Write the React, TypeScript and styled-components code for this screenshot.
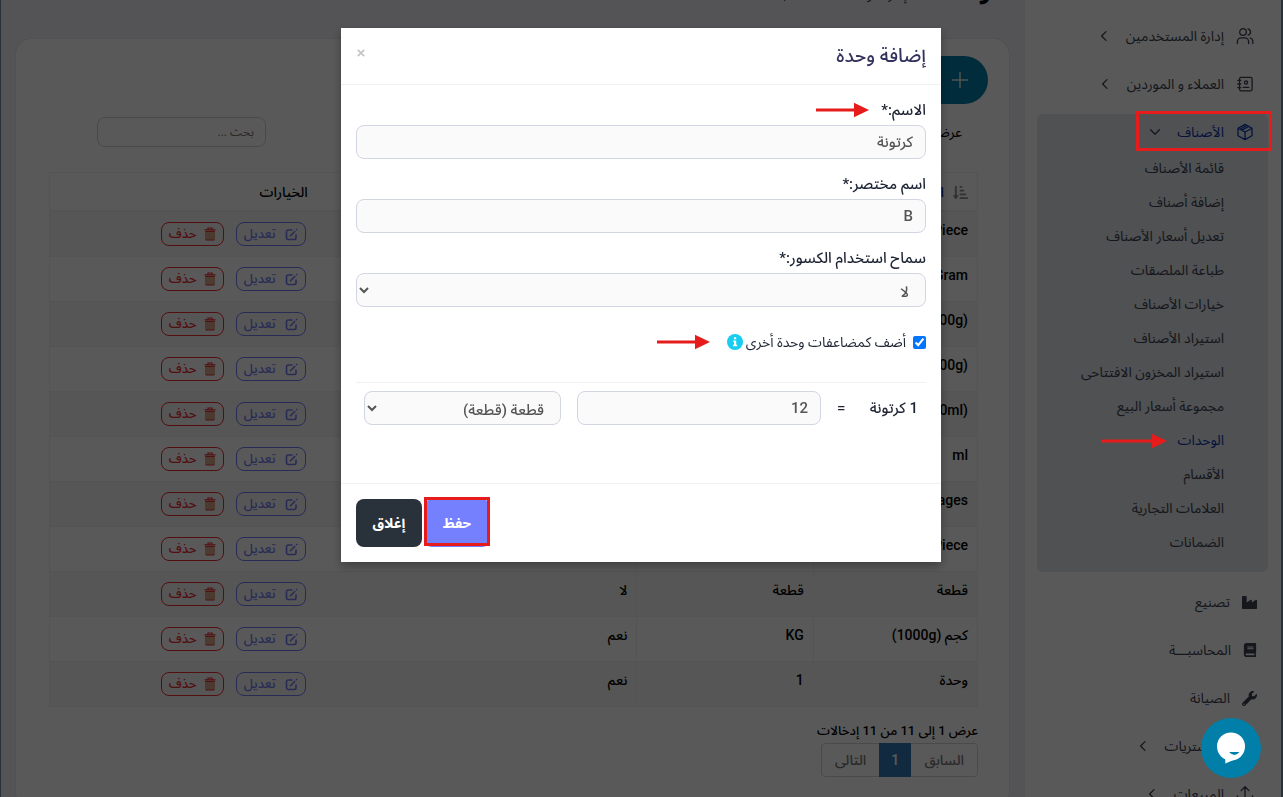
import React from "react";
import styled, { createGlobalStyle, css } from "styled-components";
import { FaIndustry, FaBook, FaWrench, FaSortAmountDownAlt } from "react-icons/fa";

const ink = "#1d2433";
const sans = `Roboto, "Noto Sans Arabic", "DejaVu Sans", sans-serif`;

const GlobalStyle = createGlobalStyle`
  *, *::before, *::after { box-sizing: border-box; }
  html, body { margin: 0; }
  body { overflow: hidden; background: #eff1f6; color: #000; font: 13px/20px ${sans}; }
  button, input, select { font-family: inherit; margin: 0; }
  ul { list-style: none; margin: 0; padding: 0; }
  a { color: inherit; text-decoration: none; }
`;

const Shell = styled.div`
  display: flex;
  height: 100vh;
  overflow: hidden;
  border: solid #6d8ca3;
  border-width: 0 2px 0 1px;
`;

const Sidebar = styled.aside`
  flex: 0 0 256px;
  padding: 18px 13px 0 12px;
  background: #fff;
  overflow: hidden;
  color: #3c4354;
`;

const Menu = styled.ul`
  display: flex;
  flex-direction: column;
  gap: 12px;
`;

const MenuItem = styled.li<{ $open?: boolean }>`
  border-radius: 6px;
  background: ${(p) => (p.$open ? "#e5e8eb" : "transparent")};
`;

const MenuLink = styled.a<{ $active?: boolean; $solid?: boolean }>`
  display: flex;
  align-items: center;
  gap: 12px;
  height: 36px;
  padding-inline-start: ${(p) => (p.$solid ? 11 : 14)}px;
  font-size: 14px;
  color: ${(p) => (p.$active ? "#0b38ad" : "inherit")};
  svg { flex: none; }
`;

const ChevronBox = styled.span`
  display: flex;
  margin-inline-start: 4px;
  color: #3c4354;
`;

const SubMenu = styled.ul`
  padding: 1px 44px 13px 0;
`;

const SubLink = styled.a<{ $active?: boolean }>`
  display: flex;
  align-items: center;
  height: 34px;
  font-size: 14px;
  color: ${(p) => (p.$active ? "#0b38ad" : "inherit")};
`;

const Main = styled.main`
  flex: 1;
  min-width: 0;
  padding: 0 16px 0 15px;
`;

const PageHead = styled.header`
  display: flex;
  align-items: baseline;
  gap: 12px;
  height: 32px;
  margin-top: -25px;
  padding-inline-start: 4px;
`;

const PageTitle = styled.h1`
  margin: 0;
  font-size: 24px;
  line-height: 32px;
`;

const PageNote = styled.small`
  font-size: 14px;
  color: #555;
`;

const Card = styled.section`
  margin-top: 32px;
  border-radius: 15px;
  background: #fff;
  box-shadow: 0 0 2px rgba(0, 0, 0, 0.15);
`;

const CardTools = styled.div`
  padding: 17px 21px 0;
`;

const AddButton = styled.button`
  display: flex;
  align-items: center;
  gap: 12px;
  height: 48px;
  padding: 0 20px;
  border: 0;
  border-radius: 24px;
  background: #027fa8;
  color: #fff;
  font-size: 14px;
`;

const TableTools = styled.div`
  display: flex;
  align-items: center;
  justify-content: space-between;
  padding: 13px 47px 0 81px;
`;

const LengthLabel = styled.label`
  display: flex;
  align-items: center;
  gap: 8px;
  font-size: 14px;
`;

const LengthSelect = styled.select`
  height: 30px;
  border: 1px solid #d8d8d8;
  border-radius: 8px;
  background: #fff;
`;

const SearchBox = styled.input`
  width: 169px;
  height: 30px;
  padding: 0 11px;
  border: 1px solid #d2d2d2;
  border-radius: 8px;
  background: #fff;
  font-size: 12px;
  &::placeholder { color: #777; opacity: 1; }
`;

const TableArea = styled.div`
  padding: 25px 31px 30px 33px;
`;

const Table = styled.table`
  width: 100%;
  table-layout: fixed;
  border-collapse: collapse;
  border: 1px solid #f0f0f0;
  font-weight: 500;
  font-size: 14px;
`;

const HeadCell = styled.th<{ $share?: string; $active?: boolean }>`
  width: ${(p) => p.$share || "auto"};
  height: 39px;
  padding: 0 9px;
  border-bottom: 1px solid #efefef;
  box-shadow: inset 0 -1px #efefef;
  text-align: start;
  font-size: 14px;
  font-weight: 500;
  color: ${(p) => (p.$active ? "#0a1f9c" : "#000")};
`;

const HeadLabel = styled.span`
  display: flex;
  align-items: center;
  gap: 9px;
  svg { color: #8d8d8d; }
`;

const Row = styled.tr`
  height: 45px;
  &:nth-child(odd) { background: #f6f6f6; }
`;

const Cell = styled.td`
  padding: 8px 9px 0;
  border: solid #f0f0f0;
  border-width: 1px 0;
  vertical-align: top;
  line-height: 20px;
  & + & { border-inline-start-width: 1px; }
`;

const ActionCell = styled.td`
  padding: 10px 11px 0;
  border: solid #f0f0f0;
  border-width: 1px 0;
  vertical-align: top;
`;

const Actions = styled.div`
  display: flex;
  gap: 12px;
`;

const RowButton = styled.button<{ $danger?: boolean }>`
  display: flex;
  align-items: center;
  justify-content: space-between;
  width: ${(p) => (p.$danger ? 63 : 70)}px;
  height: 24px;
  padding: 0 7px;
  border: 1px solid currentColor;
  border-radius: 8px;
  background: none;
  color: ${(p) => (p.$danger ? "#e92b30" : "#727cf5")};
  font-size: 13px;
  font-weight: 500;
`;

const Summary = styled.p`
  margin: 14px 0 2px;
  font-size: 13px;
  font-weight: 500;
`;

const Pager = styled.nav`
  display: flex;
  width: 157px;
  height: 34px;
  border: 1px solid #d5d5d5;
  border-radius: 4px;
`;

const PageLink = styled.button<{ $current?: boolean }>`
  flex: ${(p) => (p.$current ? "0 0 32px" : "1 1 auto")};
  margin: ${(p) => (p.$current ? "-1px 0" : "0")};
  padding: 0;
  border: 0;
  background: ${(p) => (p.$current ? "#337ab7" : "none")};
  color: ${(p) => (p.$current ? "#fff" : "#777")};
  font-size: 14px;
  font-weight: 500;
`;

const Backdrop = styled.div`
  position: fixed;
  inset: 0;
  display: flex;
  align-items: flex-start;
  justify-content: center;
  padding: 28px 1px 0 0;
  background: rgba(0, 0, 0, 0.65);
`;

const Dialog = styled.form`
  width: 600px;
  max-width: 100%;
  background: #fff;
  color: ${ink};
  box-shadow: 0 4px 10px rgba(0, 0, 0, 0.3);
`;

const DialogHead = styled.header`
  display: flex;
  align-items: center;
  justify-content: space-between;
  height: 57px;
  padding: 0 15px;
  border-bottom: 1px solid #f1f1f1;
`;

const DialogTitle = styled.h2`
  margin: 0;
  font-size: 19px;
  line-height: 28px;
  font-weight: 500;
  color: #32325d;
`;

const CloseIcon = styled.button`
  display: flex;
  padding: 0 1px 6px;
  border: 0;
  background: none;
  color: #c4c4c4;
`;

const DialogBody = styled.div`
  padding: 15px 15px 58px;
`;

const Field = styled.div`
  display: flex;
  flex-direction: column;
  align-items: flex-start;
  gap: 5px;
  margin-bottom: 15px;
`;

const FieldLabel = styled.label`
  position: relative;
  font-size: 15px;
  line-height: 20px;
  font-weight: 500;
`;

const control = css`
  height: 34px;
  border: 1px solid #d2d5e2;
  border-radius: 8px;
  background: #fafafa;
  color: #555;
  font-size: 15px;
  font-weight: 500;
`;

const TextInput = styled.input`
  ${control}
  width: 100%;
  padding: 0 12px;
`;

const SelectInput = styled.select`
  ${control}
  width: 100%;
  padding: 3px 12px 0 0;
`;

const CheckRow = styled.div`
  display: flex;
  align-items: center;
  gap: 7px;
  height: 40px;
  margin-bottom: 20px;
  font-size: 14px;
`;

const CheckBox = styled.input`
  width: 13px;
  height: 13px;
  accent-color: #0075ff;
`;

const CheckLabel = styled.label`
  position: relative;
  display: flex;
  align-items: center;
  gap: 3px;
`;

const Conversion = styled.div`
  display: grid;
  grid-template-columns: 47px 18px 1fr 197px;
  column-gap: 16px;
  align-items: center;
  padding: 8px 8px 0;
  border-top: 1px solid #f1f1f1;
  font-size: 15px;
  font-weight: 500;
  white-space: nowrap;
`;

const EqualSign = styled.span`
  text-align: end;
`;

const DialogFoot = styled.footer`
  display: flex;
  justify-content: flex-end;
  gap: 2px;
  padding: 15px;
  border-top: 1px solid #f1f1f1;
`;

const FootButton = styled.button<{ $primary?: boolean }>`
  position: relative;
  width: 66px;
  height: 48px;
  border: 0;
  border-radius: 8px;
  background: ${(p) => (p.$primary ? "#7580ff" : "#29313b")};
  color: #fff;
  font-size: 14px;
  font-weight: 700;
`;

const Highlight = styled.span`
  position: absolute;
  inset: -2px 0 1px 0;
  border: 3px solid #e61c1c;
`;

const ArrowMark = styled.svg<{ $start: number }>`
  position: absolute;
  top: 50%;
  inset-inline-start: ${(p) => p.$start}px;
  transform: translateY(-50%);
`;

/* Annotations on the menu stay above the dimmed backdrop. */
const MarkLayer = styled.div`
  position: fixed;
  top: 0;
  right: 2px;
  width: 256px;
  height: 100%;
  pointer-events: none;
`;

const MenuFrame = styled.span`
  position: absolute;
  top: 111px;
  right: 9px;
  width: 136px;
  height: 40px;
  border: 3px solid #e61c1c;
`;

const MenuArrow = styled.svg`
  position: absolute;
  top: 433px;
  right: 114px;
`;

const ChatButton = styled.button`
  position: fixed;
  right: 22px;
  bottom: 19px;
  display: flex;
  align-items: center;
  justify-content: center;
  width: 60px;
  height: 60px;
  padding: 0;
  border: 0;
  border-radius: 50%;
  background: #027fa8;
`;

const stroke = {
  fill: "none",
  stroke: "currentColor",
  strokeLinecap: "round" as const,
  strokeLinejoin: "round" as const,
};

const UsersIcon = () => (
  <svg width="18" height="18" viewBox="0 0 18 18" {...stroke} strokeWidth={1.3}>
    <circle cx="7" cy="5" r="3.3" />
    <path d="M1.4 16.5v-2a3.6 3.6 0 0 1 3.6-3.6h4a3.6 3.6 0 0 1 3.6 3.6v2M12 1.8a3.3 3.3 0 0 1 0 6.4M14.2 11a3.6 3.6 0 0 1 2.6 3.5v2" />
  </svg>
);

const ContactsIcon = () => (
  <svg width="18" height="18" viewBox="0 0 18 18" {...stroke} strokeWidth={1.3}>
    <rect x="3.5" y="2.4" width="12.6" height="13.4" rx="1.5" />
    <circle cx="10" cy="7.6" r="1.6" />
    <path d="M7.2 12.4h5.6M1.8 5.4h3M1.8 9h3M1.8 12.6h3" />
  </svg>
);

const BoxIcon = () => (
  <svg width="18" height="18" viewBox="0 0 18 18" {...stroke} strokeWidth={1.3}>
    <path d="M9 1.4l7 3.8v7.6l-7 3.8-7-3.8V5.2zM9 9l7-3.8M9 9v7.600M9 9L2 5.200M12.800 3.500L5.700 7.200M10.800 2.400L3.900 6.200" />
  </svg>
);

const UploadIcon = () => (
  <svg width="18" height="18" viewBox="0 0 18 18" {...stroke} strokeWidth={1.3}>
    <path d="M9 12V2M5 5.6L9 1.8l4 3.8M1.5 11v3a2 2 0 0 0 2 2h11a2 2 0 0 0 2-2v-3" />
  </svg>
);

const Chevron = ({ down }: { down?: boolean }) => (
  <ChevronBox>
    <svg width="12" height="12" viewBox="0 0 12 12" {...stroke} strokeWidth={1.3}>
      <path d={down ? "M1.6 3.8L6 8.2l4.4-4.4" : "M8 1.6L3.6 6 8 10.4"} />
    </svg>
  </ChevronBox>
);

const EditIcon = () => (
  <svg width="13" height="13" viewBox="0 0 13 13" fill="none" stroke="currentColor" strokeWidth="1.6">
    <path d="M7.5 2H3.2A1.7 1.7 0 0 0 1.500 3.700v6.100a1.700 1.700 0 0 0 1.700 1.700h6.100a1.700 1.700 0 0 0 1.700-1.700V6.500" />
    <path d="M5 8.300L10.200 3M11.200 2l1-1" />
  </svg>
);

const TrashIcon = () => (
  <svg width="12" height="14" viewBox="0 0 12 14" fill="none" stroke="currentColor">
    <path d="M0.500 2.800h11M4 2.500V1h4v1.500" strokeWidth="1.2" />
    <path d="M1.200 4.500h9.600M1.800 13h8.400" strokeWidth="1.1" />
    <path d="M2 4.500V13M4 4.500V13M6 4.500V13M8 4.500V13M10 4.500V13" stroke="#c2612f" strokeWidth="1.1" />
  </svg>
);

const PlusIcon = () => (
  <svg width="16" height="16" viewBox="0 0 16 16" stroke="#e8e8e8" strokeWidth="1.5">
    <path d="M8 0v16M0 8h16" />
  </svg>
);

const CloseGlyph = () => (
  <svg width="8" height="8" viewBox="0 0 8 8" stroke="currentColor" strokeWidth="1.7">
    <path d="M0.8 0.8l6.4 6.4M7.2 0.8L0.8 7.2" />
  </svg>
);

const InfoIcon = () => (
  <svg width="16" height="16" viewBox="0 0 16 16">
    <circle cx="8" cy="8" r="8" fill="#17cdf0" />
    <path d="M7 3.2h2.2v2H7zM6.2 6.4h3v4.4h1v1.4H6v-1.4h1V7.8h-.8z" fill="#fff" />
  </svg>
);

const Arrow = ({ start, length }: { start: number; length: number }) => (
  <ArrowMark $start={start} width={length} height="16" viewBox={`0 0 ${length} 16`}>
    <path d={`M0 8H${length - 14}`} stroke="#e61c1c" strokeWidth="3" />
    <path d={`M${length - 15} 0.7L${length} 8L${length - 15} 15.3z`} fill="#e61c1c" />
  </ArrowMark>
);

const ChatIcon = () => (
  <svg width="30" height="32" viewBox="0 0 30 32">
    <path d="M9 22l.4 9.500L22 26z" fill="#fff" />
    <circle cx="15" cy="14.5" r="14" fill="#fff" />
    <path d="M13 20h10.500q-4.800 5.800-10.500 0z" fill="#027fa8" />
  </svg>
);

const productLinks = [
  "قائمة الأصناف",
  "إضافة أصناف",
  "تعديل أسعار الأصناف",
  "طباعة الملصقات",
  "خيارات الأصناف",
  "استيراد الأصناف",
  "استيراد المخزون الافتتاحى",
  "مجموعة أسعار البيع",
  "الوحدات",
  "الأقسام",
  "العلامات التجارية",
  "الضمانات",
];

const units: [string, string, string][] = [
  ["Piece", "Pc(s)", "لا"],
  ["Gram", "g", "نعم"],
  ["KG (1000g)", "kg", "نعم"],
  ["Pack (500g)", "pack", "نعم"],
  ["Bottle (250ml)", "btl", "نعم"],
  ["ml", "ml", "نعم"],
  ["Packages", "pkg", "لا"],
  ["Piece", "pcs", "لا"],
  ["قطعة", "قطعة", "لا"],
  ["كجم (1000g)", "KG", "نعم"],
  ["وحدة", "1", "نعم"],
];

export default function App() {
  return (
    <>
      <GlobalStyle />
      <Shell dir="rtl" lang="ar">
        <Sidebar>
          <Menu>
            <MenuItem><MenuLink href="#users"><UsersIcon />إدارة المستخدمين<Chevron /></MenuLink></MenuItem>
            <MenuItem><MenuLink href="#contacts"><ContactsIcon />العملاء و الموردين<Chevron /></MenuLink></MenuItem>
            <MenuItem $open>
              <MenuLink href="#products" $active><BoxIcon />الأصناف<Chevron down /></MenuLink>
              <SubMenu>
                {productLinks.map((text) => (
                  <li key={text}><SubLink href="#sub" $active={text === "الوحدات"}>{text}</SubLink></li>
                ))}
              </SubMenu>
            </MenuItem>
            <MenuItem><MenuLink href="#make" $solid><FaIndustry size={15} />تصنيع</MenuLink></MenuItem>
            <MenuItem><MenuLink href="#books" $solid><FaBook size={14} />المحاسبـــة</MenuLink></MenuItem>
            <MenuItem><MenuLink href="#repair" $solid><FaWrench size={15} />الصيانة</MenuLink></MenuItem>
            <MenuItem><MenuLink href="#buy"><UploadIcon />المشتريات<Chevron /></MenuLink></MenuItem>
            <MenuItem><MenuLink href="#sell"><UploadIcon />المبيعات<Chevron /></MenuLink></MenuItem>
          </Menu>
        </Sidebar>
        <Main>
          <PageHead>
            <PageTitle>الوحدات</PageTitle>
            <PageNote>إدارة الوحدات الخاصة بك</PageNote>
          </PageHead>
          <Card>
            <CardTools>
              <AddButton type="button"><PlusIcon />إضافة</AddButton>
            </CardTools>
            <TableTools>
              <LengthLabel>عرض
                <LengthSelect defaultValue="25"><option>25</option></LengthSelect>
              </LengthLabel>
              <SearchBox type="search" aria-label="بحث" placeholder="بحث ..." />
            </TableTools>
            <TableArea>
              <Table>
                <thead>
                  <tr>
                    <HeadCell $share="17.7%" $active><HeadLabel><FaSortAmountDownAlt size={15} />الاسم</HeadLabel></HeadCell>
                    <HeadCell $share="19%">اسم مختصر</HeadCell>
                    <HeadCell $share="34.5%">سماح استخدام الكسور</HeadCell>
                    <HeadCell>الخيارات</HeadCell>
                  </tr>
                </thead>
                <tbody>
                  {units.map(([name, short, fraction], i) => (
                    <Row key={i}>
                      <Cell><bdi>{name}</bdi></Cell>
                      <Cell>{short}</Cell>
                      <Cell>{fraction}</Cell>
                      <ActionCell>
                        <Actions>
                          <RowButton type="button"><EditIcon />تعديل</RowButton>
                          <RowButton type="button" $danger><TrashIcon />حذف</RowButton>
                        </Actions>
                      </ActionCell>
                    </Row>
                  ))}
                </tbody>
              </Table>
              <Summary>عرض 1 إلى 11 من 11 إدخالات</Summary>
              <Pager>
                <PageLink>السابق</PageLink>
                <PageLink $current>1</PageLink>
                <PageLink>التالى</PageLink>
              </Pager>
            </TableArea>
          </Card>
        </Main>
      </Shell>
      <Backdrop dir="rtl" lang="ar">
        <Dialog>
          <DialogHead>
            <DialogTitle>إضافة وحدة</DialogTitle>
            <CloseIcon type="button" aria-label="إغلاق"><CloseGlyph /></CloseIcon>
          </DialogHead>
          <DialogBody>
            <Field>
              <FieldLabel htmlFor="name">الاسم:*<Arrow start={57} length={53} /></FieldLabel>
              <TextInput id="name" defaultValue="كرتونة" />
            </Field>
            <Field>
              <FieldLabel htmlFor="short">اسم مختصر:*</FieldLabel>
              <TextInput id="short" defaultValue="B" />
            </Field>
            <Field>
              <FieldLabel htmlFor="fraction">سماح استخدام الكسور:*</FieldLabel>
              <SelectInput id="fraction" defaultValue="لا"><option>لا</option><option>نعم</option></SelectInput>
            </Field>
            <CheckRow>
              <CheckBox type="checkbox" id="multiple" defaultChecked />
              <CheckLabel htmlFor="multiple">أضف كمضاعفات وحدة أخرى<InfoIcon /><Arrow start={196} length={53} /></CheckLabel>
            </CheckRow>
            <Conversion>
              <span>1 كرتونة</span>
              <EqualSign>=</EqualSign>
              <TextInput aria-label="العدد" defaultValue="12" />
              <SelectInput aria-label="الوحدة" defaultValue="قطعة (قطعة)"><option>قطعة (قطعة)</option></SelectInput>
            </Conversion>
          </DialogBody>
          <DialogFoot>
            <FootButton type="button" $primary>حفظ<Highlight /></FootButton>
            <FootButton type="button">إغلاق</FootButton>
          </DialogFoot>
        </Dialog>
      </Backdrop>
      <MarkLayer>
        <MenuFrame />
        <MenuArrow width="66" height="16" viewBox="0 0 66 16">
          <path d="M0 8H52" stroke="#e61c1c" strokeWidth="3" />
          <path d="M51 0.7L66 8L51 15.3z" fill="#e61c1c" />
        </MenuArrow>
      </MarkLayer>
      <ChatButton type="button" aria-label="محادثة"><ChatIcon /></ChatButton>
    </>
  );
}
